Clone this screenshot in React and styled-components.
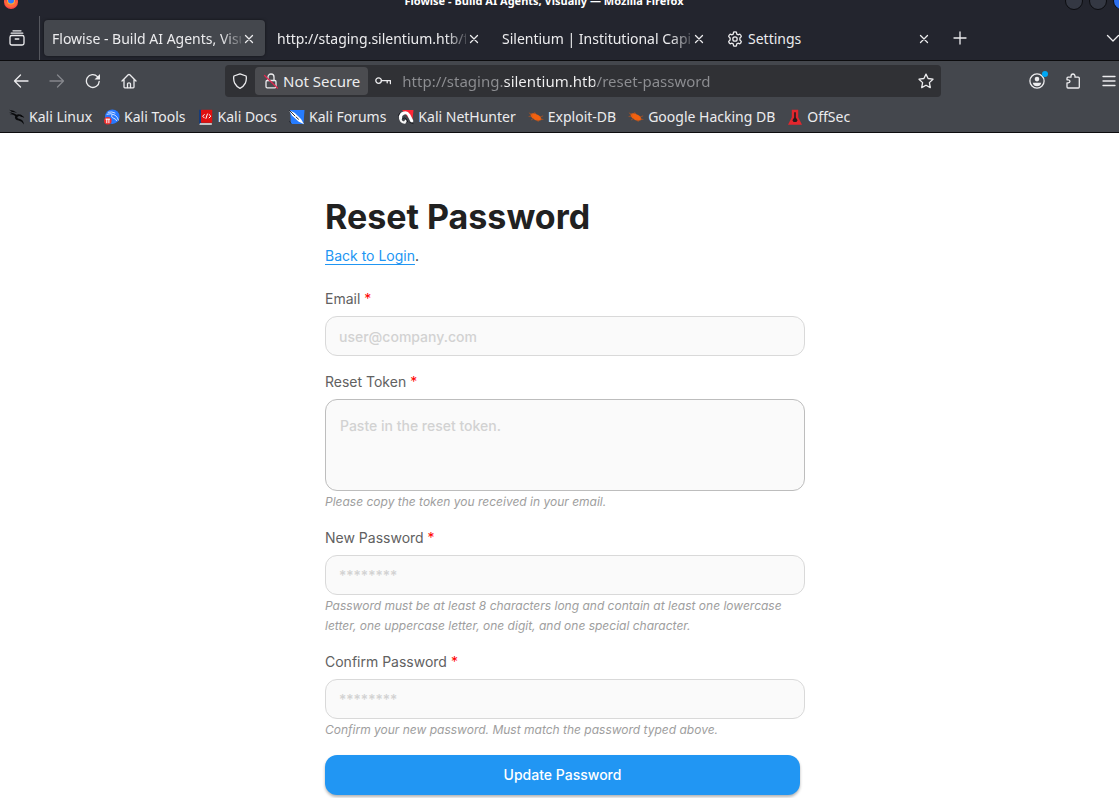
import React, { useState } from "react";
import styled, { createGlobalStyle, css } from "styled-components";

const tabs = [
  { id: 1, title: "Flowise - Build AI Agents, Visu" },
  { id: 2, title: "http://staging.silentium.htb/f" },
  { id: 3, title: "Silentium | Institutional Capita" },
  { id: 4, title: "Settings", icon: "gear" },
];

const bookmarks = [
  { name: "Kali Linux", icon: "dragon" },
  { name: "Kali Tools", icon: "tools" },
  { name: "Kali Docs", icon: "docs" },
  { name: "Kali Forums", icon: "forums" },
  { name: "Kali NetHunter", icon: "nethunter" },
  { name: "Exploit-DB", icon: "bug" },
  { name: "Google Hacking DB", icon: "bug" },
  { name: "OffSec", icon: "offsec" },
];

const fields = [
  { id: "email", label: "Email", type: "email", placeholder: "user@company.com" },
  {
    id: "token",
    label: "Reset Token",
    placeholder: "Paste in the reset token.",
    hint: "Please copy the token you received in your email.",
    multiline: true,
  },
  {
    id: "password",
    label: "New Password",
    type: "password",
    placeholder: "********",
    hint: "Password must be at least 8 characters long and contain at least one lowercase letter, one uppercase letter, one digit, and one special character.",
  },
  {
    id: "confirm",
    label: "Confirm Password",
    type: "password",
    placeholder: "********",
    hint: "Confirm your new password. Must match the password typed above.",
  },
];

const icons = {
  firefox: (
    <>
      <circle cx="8" cy="8" r="7" fill="#ff4648" />
      <path d="M1.5 5a7 7 0 0 0 13 0v3a6.6 6.6 0 0 1-13 0z" fill="#ff6a3a" />
      <circle cx="8" cy="6.4" r="4" fill="#ffb22e" />
      <circle cx="8" cy="6.4" r="3" fill="#2f7bff" />
    </>
  ),
  archive: (
    <>
      <rect x="1" y="5.5" width="14" height="9.5" rx="1.8" />
      <path d="M2.2 3.2h11.6M4 .8h8M6.2 9h3.6" />
    </>
  ),
  close: <path d="M4.5 4.5l7 7M11.5 4.5l-7 7" />,
  plus: <path d="M8 2v12M2 8h12" />,
  chevron: <path d="M2.5 5.5L8 11l5.5-5.5" />,
  gear: (
    <>
      <path d="M6.6 1.2Q8 .5 9.4 1.2L9.8 3.1 11 3.8 12.9 3.2Q14.2 4 14.3 5.6L12.9 7V9L14.3 10.4Q14.2 12 12.9 12.8L11 12.2 9.8 12.9 9.4 14.8Q8 15.5 6.6 14.8L6.2 12.9 5 12.2 3.1 12.8Q1.8 12 1.7 10.4L3.1 9V7L1.7 5.6Q1.8 4 3.1 3.2L5 3.8 6.2 3.1z" />
      <circle cx="8" cy="8" r="2.2" />
    </>
  ),
  back: <path d="M15 8H1.5M7.5 2L1.5 8l6 6" />,
  forward: <path d="M1 8h13.5M8.5 2l6 6-6 6" />,
  reload: (
    <>
      <path d="M14.2 8.4A6.4 6.4 0 1 1 12.4 3.6L13.5 4.7" />
      <path d="M15 1v5.5H9.5z" fill="currentColor" stroke="none" />
    </>
  ),
  home: (
    <>
      <path d="M1 8l6.2-6.2q.8-.7 1.6 0L15 8M3 6.5V14q0 .8.8.8h8.4q.8 0 .8-.8V6.5" />
      <path d="M6.5 14.5V10.8q0-1 1.5-1t1.5 1v3.7" />
    </>
  ),
  shield: (
    <path d="M8 .9L14.1 3q.8 3.6-.9 7.4-1.9 3.5-5.2 4.9-3.3-1.4-5.2-4.9Q1.1 6.6 1.9 3z" />
  ),
  lock: (
    <>
      <rect x="3" y="7.5" width="10" height="7.3" rx="1.2" />
      <path d="M5 7.5V4a3 3 0 0 1 6 0v3.5" />
      <path d="M1.5 2.5l13 12.5" stroke="#e22850" />
    </>
  ),
  key: (
    <>
      <circle cx="3.6" cy="7.6" r="2.8" />
      <path d="M6.4 7.6h9v3M12.2 7.6v2.2" />
    </>
  ),
  star: (
    <path d="M8 1.1l2.1 4.4 4.9.7-3.6 3.4.9 5-4.3-2.4-4.3 2.4.9-5L1 6.2l4.9-.7z" />
  ),
  account: (
    <>
      <circle cx="8" cy="8" r="7.1" />
      <circle cx="8" cy="6.1" r="2.3" fill="currentColor" stroke="none" />
      <path d="M3.7 9.7h8.6q-.8 3.6-4.3 3.6T3.7 9.7z" fill="currentColor" stroke="none" />
    </>
  ),
  puzzle: (
    <path d="M2 9.8V14q0 1 1 1h10.3q1 0 1-1V5.2q0-1-1-1H10V3.3Q10 1 8 1T6 3.3v.9H3q-1 0-1 1V6.8h1.3Q5 7 5 8.3T3.3 9.8z" />
  ),
  menu: <path d="M2 3.5h12M2 8h12M2 12.5h12" />,
  dragon: (
    <>
      <path d="M0 .8Q5 1 8.2 4Q4 2.6 1 3.4Q5 3.7 7.6 5.8 9.5 4.4 12.5 6.2L15.2 8.2 12.6 7.7Q10.5 6.6 8.8 7.4 7.4 9 10.2 9.8 14.4 10.6 15 15.4 12.8 11.9 9.6 11.5 4.9 10.4 6.2 6.9 3.5 4.8.5 5.5L3 4.2.2 4 2.8 2.6z" fill="#090a0c" />
      <path d="M15.4 8.8l-4-3.6.2 2.2z" fill="#090a0c" />
    </>
  ),
  tools: (
    <>
      <circle cx="8.3" cy="7.7" r="7.3" fill="#2777ff" />
      <path d="M3 5.2q4.3-1.5 8 1 2.8 1.7 3.4 4.8M4.2 3.2Q8 2.2 11 4M8 5.6q-1.3 3 1.8 3.7 2 .5 2.8 2.4" stroke="#e5efff" strokeWidth=".9" />
      <circle cx="3.8" cy="11.8" r="3.8" fill="#ed2d2d" />
      <path d="M2 10.2h3.6M2.8 10.2v3.6M4.9 10.2v3.6" stroke="#fff" strokeWidth="1" />
    </>
  ),
  docs: (
    <>
      <path d="M1 .8h3v14H1z" fill="#173c79" />
      <path d="M3 .8h11.2v13H3z" fill="#df1010" />
      <path d="M2 14.2h11.8v1.5H1.3z" fill="#eee" />
      <path d="M6.3 5.5L4.6 7.2l1.7 1.7M8 9.4L9.4 5M11.1 5.5l1.7 1.7-1.7 1.7" stroke="#fff" strokeWidth="1" />
    </>
  ),
  forums: (
    <>
      <path d="M1 1h14.5l-1 14H2z" fill="#267cff" />
      <path d="M0 1.2l5.5 2.6L12 10l3 5.2-5.5-2.6L3 6.5z" fill="#fff" />
      <path d="M0 1l6 6M7.3 8.2l2.2 2M2.2 14.5L0 12" stroke="#292d38" strokeWidth="1" />
    </>
  ),
  nethunter: (
    <>
      <path d="M4 1h11.5l-1.3 12z" fill="#ff2635" />
      <path d="M2.6 9.3A4.5 4.5 0 0 1 10.8 6L13.8 12" stroke="#fff" strokeWidth="3" />
      <path d="M2.2 9.5q.6 3.8 4.5 4.3l1-2.1" stroke="#f7f7f7" strokeWidth="2" />
      <path d="M4.8 9.5q2-1.4 3.4.3l1.4 2.9M0 7l2-3M12 13.5l3 1" stroke="#191a20" strokeWidth="1" />
    </>
  ),
  bug: (
    <>
      <path d="M2.4 5.2Q5 3 9 5.4q4.6 1.6 4.4 5.6-4.4 2-8-.9Q2.6 8.4 2.4 5.2z" fill="#f2610f" />
      <path d="M1.2 4l3 1.8M6.6 3.4l1.6 1.8M14.8 7l-2.6.9M15 10.4l-2.6-.3M1 7.4l3-.2M3.4 10.8l2.2-1.4M9.4 11l.8 1.6" stroke="#b9551c" strokeWidth=".7" />
    </>
  ),
  offsec: (
    <>
      <path d="M4.8.8h6.4v7.4L15 15.7H1l3.8-7.5z" fill="#e3262d" />
      <path d="M7.2 3.2h1.6v5.4l1.8 2.6-1.2 1.8H6.6l-1.2-1.8 1.8-2.6z" fill="#27191d" />
    </>
  ),
};

const Icon = ({ name, size = 16 }) => (
  <StIcon viewBox="0 0 16 16" $size={size} aria-hidden="true">
    {icons[name]}
  </StIcon>
);

const Browser = () => {
  const [active, setActive] = useState(1);
  const [url, setUrl] = useState("http://staging.silentium.htb/reset-password");

  return (
    <StChrome>
      <StTitleBar>
        <Icon name="firefox" />
        <StWindowTitle>
          Flowise - Build AI Agents, Visually — Mozilla Firefox
        </StWindowTitle>
        <StWindowButtons>
          <StDot aria-label="Minimize" />
          <StDot aria-label="Maximize" />
          <StDot aria-label="Close window" $color="#2b6ff0" />
        </StWindowButtons>
      </StTitleBar>

      <StTabBar>
        <StArchive aria-label="Recent browsing">
          <Icon name="archive" />
        </StArchive>
        {tabs.map((tab) => (
          <StTab key={tab.id} $active={tab.id === active}>
            <StTabTitle onClick={() => setActive(tab.id)} $fade={!tab.icon}>
              {tab.icon && <Icon name={tab.icon} />}
              {tab.title}
            </StTabTitle>
            <StTabClose aria-label={`Close ${tab.title}`}>
              <Icon name="close" />
            </StTabClose>
          </StTab>
        ))}
        <StToolButton aria-label="New tab">
          <Icon name="plus" />
        </StToolButton>
        <StTabList aria-label="List all tabs">
          <Icon name="chevron" />
        </StTabList>
      </StTabBar>

      <StNavBar>
        <StToolGroup>
          <StToolButton aria-label="Back">
            <Icon name="back" />
          </StToolButton>
          <StToolButton aria-label="Forward" disabled>
            <Icon name="forward" />
          </StToolButton>
          <StToolButton aria-label="Reload">
            <Icon name="reload" />
          </StToolButton>
          <StToolButton aria-label="Home">
            <Icon name="home" />
          </StToolButton>
        </StToolGroup>
        <StUrlBar>
          <StUrlButton aria-label="Tracking protection">
            <Icon name="shield" />
          </StUrlButton>
          <StNotSecure>
            <Icon name="lock" />
            Not Secure
          </StNotSecure>
          <StUrlButton aria-label="Saved logins">
            <Icon name="key" />
          </StUrlButton>
          <StUrlInput
            aria-label="Address"
            spellCheck={false}
            value={url}
            onChange={(e) => setUrl(e.target.value)}
          />
          <StUrlButton aria-label="Bookmark this page">
            <Icon name="star" />
          </StUrlButton>
        </StUrlBar>
        <StToolGroup $bleed>
          <StToolButton aria-label="Account">
            <Icon name="account" />
            <StBadge />
          </StToolButton>
          <StToolButton aria-label="Extensions">
            <Icon name="puzzle" />
          </StToolButton>
          <StToolButton aria-label="Menu">
            <Icon name="menu" />
          </StToolButton>
        </StToolGroup>
      </StNavBar>

      <StBookmarks>
        {bookmarks.map((item) => (
          <StBookmark key={item.name} href="#">
            <Icon name={item.icon} />
            {item.name}
          </StBookmark>
        ))}
      </StBookmarks>
    </StChrome>
  );
};

const ResetPassword = () => {
  return (
    <StMain>
      <StHeading>Reset Password</StHeading>
      <StBack>
        <a href="#">Back to Login</a>.
      </StBack>
      <StForm onSubmit={(e) => e.preventDefault()}>
        {fields.map((field) => (
          <div key={field.id}>
            <StLabel htmlFor={field.id}>
              {field.label} <StRequired>*</StRequired>
            </StLabel>
            {field.multiline ? (
              <StTextarea id={field.id} placeholder={field.placeholder} />
            ) : (
              <StInput
                id={field.id}
                type={field.type}
                placeholder={field.placeholder}
              />
            )}
            {field.hint && <StHint>{field.hint}</StHint>}
          </div>
        ))}
        <StSubmit type="submit">Update Password</StSubmit>
      </StForm>
    </StMain>
  );
};

const App = () => {
  return (
    <>
      <GlobalStyle />
      <Browser />
      <ResetPassword />
    </>
  );
};

export default App;

const GlobalStyle = createGlobalStyle`
  * {
    box-sizing: border-box;
  }

  body {
    margin: 0;
    background: #fff;
    overflow-x: hidden;
    scrollbar-width: none;
  }

  html {
    scrollbar-width: none;
  }

  button {
    border: 0;
    padding: 0;
    background: none;
    color: inherit;
    font: inherit;
  }
`;

const StIcon = styled.svg`
  width: ${({ $size }) => $size}px;
  height: ${({ $size }) => $size}px;
  flex: none;
  fill: none;
  stroke: currentColor;
  stroke-width: 1.3;
  stroke-linecap: round;
  stroke-linejoin: round;

  [fill] {
    stroke: none;
  }
`;

const StChrome = styled.header`
  color: #ececee;
  background: #44474d;
  font-family: "Noto Sans", sans-serif;
  font-size: 14px;
  line-height: 20px;
  overflow: hidden;
`;

const StTitleBar = styled.div`
  height: 16px;
  padding-left: 3px;
  display: flex;
  align-items: flex-end;
  justify-content: space-between;
  background: #23252e;

  > * {
    margin-bottom: 6px;
  }
`;

const StWindowTitle = styled.div`
  padding-left: 4px;
  font-size: 11px;
  line-height: 18px;
  font-weight: 700;
  color: #fff;
`;

const StWindowButtons = styled.div`
  display: flex;
  gap: 6px;
  margin-right: -12px;
`;

const StDot = styled.button`
  width: 18px;
  height: 18px;
  border: 1px solid #0c0d10;
  border-radius: 50%;
  background: ${({ $color }) => $color || "#343843"};
`;

const StTabBar = styled.div`
  height: 45px;
  display: flex;
  align-items: center;
  gap: 4px;
  background: #23252e;
  border-bottom: 1px solid #0c0c0e;
`;

const StArchive = styled.button`
  width: 40px;
  height: 44px;
  padding-left: 9px;
  display: flex;
  align-items: center;
  border-right: 1px solid #55575e;
`;

const StTab = styled.div`
  flex: 0 1 221px;
  min-width: 0;
  height: 36px;
  padding: 2px 8px 0;
  display: flex;
  align-items: center;
  border-radius: 4px;

  ${({ $active }) =>
    $active &&
    css`
      background: #44474d;
      box-shadow: 0 0 3px rgba(0, 0, 0, 0.5);
    `}
`;

const StTabTitle = styled.button`
  flex: 1;
  min-width: 0;
  display: flex;
  align-items: center;
  gap: 5px;
  overflow: hidden;
  white-space: nowrap;
  ${({ $fade }) =>
    $fade &&
    css`
      mask-image: linear-gradient(to left, rgba(0, 0, 0, 0.2), #000 20px);
    `}
`;

const StTabClose = styled.button`
  width: 16px;
  height: 16px;
  display: flex;
`;

const StToolButton = styled.button`
  position: relative;
  width: 32px;
  height: 32px;
  display: flex;
  align-items: center;
  justify-content: center;

  &:disabled {
    color: #85878c;
  }
`;

const StTabList = styled(StToolButton)`
  margin-left: auto;
  margin-right: -10px;
`;

const StNavBar = styled.div`
  height: 40px;
  padding-left: 5px;
  display: flex;
  align-items: center;
`;

const StToolGroup = styled.div`
  display: flex;
  gap: 4px;
  margin-right: ${({ $bleed }) => ($bleed ? "-6px" : "0")};
`;

const StUrlBar = styled.div`
  flex: 1;
  height: 32px;
  margin: 0 80px;
  padding: 2px 0;
  display: flex;
  background: #303135;
  border-radius: 4px;
  font-size: 15px;
`;

const StUrlButton = styled.button`
  width: 30px;
  display: flex;
  align-items: center;
  justify-content: center;
`;

const StNotSecure = styled.button`
  padding: 0 8px;
  display: flex;
  align-items: center;
  gap: 4px;
  background: #4b4c50;
  border-radius: 4px;
  white-space: nowrap;
`;

const StUrlInput = styled.input`
  flex: 1;
  min-width: 0;
  border: 0;
  padding: 0 4px;
  outline: 0;
  font: inherit;
  color: #8d8e92;
  /* the domain stands out from the rest of the address */
  background: linear-gradient(
    to right,
    #8d8e92 105px,
    #f2f2f3 105px 197px,
    #8d8e92 197px
  );
  background-clip: text;
  -webkit-text-fill-color: transparent;
`;

const StBadge = styled.span`
  position: absolute;
  top: 6px;
  right: 5px;
  width: 6px;
  height: 6px;
  border-radius: 50%;
  background: #00a8f5;
`;

const StBookmarks = styled.nav`
  height: 32px;
  padding: 0 9px;
  display: flex;
  align-items: center;
  gap: 12px;
  border-bottom: 1px solid #0c0c0e;
`;

const StBookmark = styled.a`
  display: flex;
  align-items: center;
  gap: 4px;
  color: inherit;
  text-decoration: none;
  white-space: nowrap;
`;

const StMain = styled.main`
  max-width: 481px;
  margin: 0 auto;
  padding: 60px 0 32px 6px;
  font-family: Inter, sans-serif;
  font-size: 14px;
  line-height: 22px;
  color: #616161;
`;

const StHeading = styled.h1`
  margin: 0;
  font-size: 34px;
  line-height: 48px;
  font-weight: 700;
  color: #212121;
`;

const StBack = styled.p`
  margin: 4px 0 21px;
  color: #212121;

  a {
    color: #2196f3;
    text-underline-offset: 3px;
  }
`;

const StForm = styled.form`
  display: flex;
  flex-direction: column;
  gap: 15px;
`;

const StLabel = styled.label`
  display: block;
  margin-bottom: 6px;
`;

const StRequired = styled.span`
  color: #f00;
`;

const StInput = styled.input`
  display: block;
  width: calc(100% + 5px);
  height: 40px;
  padding: 0 13px;
  border: 1px solid #d9d9d9;
  border-radius: 12px;
  outline: 0;
  background: #fafafa;
  color: #212121;
  font: inherit;
  font-weight: 500;

  &::placeholder {
    color: #d2d2d2;
  }
`;

const StTextarea = styled(StInput).attrs({ as: "textarea" })`
  height: 92px;
  padding: 15px 14px;
  border-color: #bdbdbd;
  resize: none;
`;

const StHint = styled.p`
  margin: 0;
  padding-top: 1px;
  font-size: 12px;
  line-height: 20px;
  font-style: italic;
  color: #9e9e9e;
`;

const StSubmit = styled.button`
  height: 40px;
  border-radius: 12px;
  background: #2196f3;
  box-shadow: 0 2px 3px rgba(0, 0, 0, 0.3);
  color: #fff;
  font-weight: 500;
`;
